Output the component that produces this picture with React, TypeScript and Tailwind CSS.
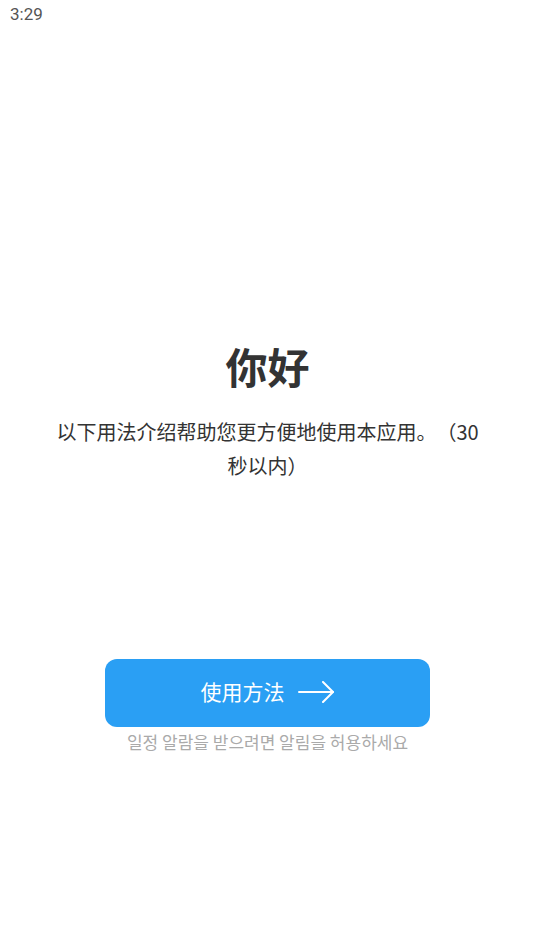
import React from "react";

const CJK = '"Noto Sans CJK SC", "Noto Sans", sans-serif';
const KR = '"Noto Sans CJK KR", "Noto Sans", sans-serif';

function ArrowRight() {
  return (
    <svg width="37" height="22" viewBox="0 0 37 22" fill="none" stroke="currentColor" strokeWidth="2" strokeLinecap="round" strokeLinejoin="round">
      <path d="M1 11h34" />
      <path d="M25 1l10 10-10 10" />
    </svg>
  );
}

export default function App() {
  return (
    <main className="min-h-[951px] w-full bg-white flex flex-col" style={{ fontFamily: CJK }}>
      {/* status bar */}
      <div className="h-[30px] px-[10px] flex items-center">
        <span className="text-[17px] text-[#555] font-['Roboto',sans-serif]">3:29</span>
      </div>

      {/* intro */}
      <h1 className="mt-[311px] text-center text-[42px] leading-[50px] font-bold text-[#333]">你好</h1>
      <p className="mt-[24px] px-12 text-center text-[20px] leading-[34px] text-[#333] [text-spacing-trim:space-all]">
        以下用法介绍帮助您更方便地使用本应用。（30秒以内）
      </p>

      {/* action */}
      <div className="mt-[176px] flex flex-col items-center">
        <button className="w-[325px] h-[68px] rounded-[12px] bg-[#2a9ff4] text-white flex items-center justify-center gap-[13px] pb-[3px]">
          <span className="text-[21px] leading-none">使用方法</span>
          <ArrowRight />
        </button>
        <span className="mt-[5px] text-[17px] leading-[20px] text-[#aaa]" style={{ fontFamily: KR }}>
          일정 알람을 받으려면 알림을 허용하세요
        </span>
      </div>
    </main>
  );
}
